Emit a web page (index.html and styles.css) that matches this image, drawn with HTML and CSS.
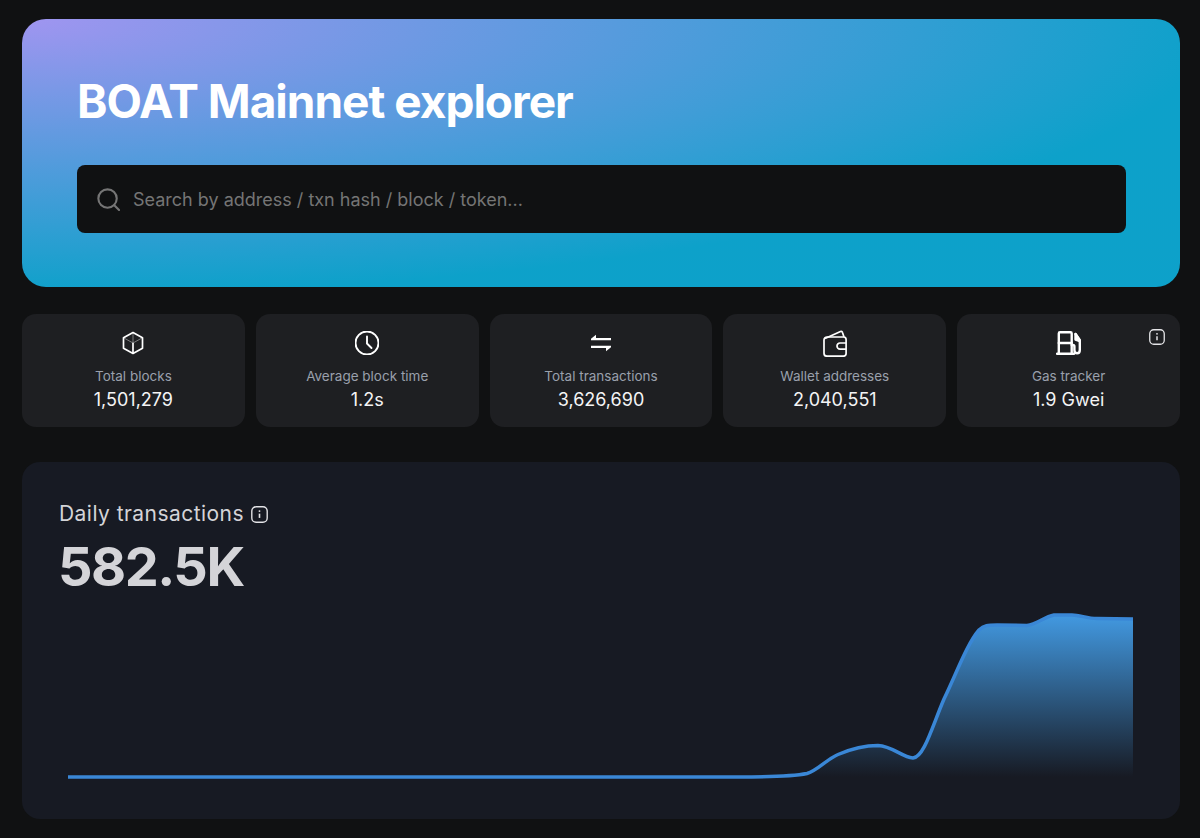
FILE: index.html
```html
<!DOCTYPE html>
<html lang="en">
<head>
    <meta charset="UTF-8">
    <meta name="viewport" content="width=device-width, initial-scale=1.0">
    <title>BOAT Mainnet explorer</title>
    <link rel="stylesheet" href="styles.css">
</head>
<body>
    <div class="hero">
        <h1 class="hero-title">BOAT Mainnet explorer</h1>
        <div class="search">
            <svg class="search-icon" viewBox="0 0 24 24" fill="none" stroke="currentColor" stroke-width="2.2">
                <circle cx="11" cy="11" r="9.6"/>
                <path d="M18 18l5 5" stroke-linecap="round"/>
            </svg>
            <span>Search by address / txn hash / block / token...</span>
        </div>
    </div>

    <div class="stats">
        <div class="stat">
            <svg class="stat-icon" viewBox="0 0 24 24" fill="none" stroke="currentColor" stroke-width="1.7" stroke-linejoin="round">
                <path d="M12 1.5l9.500 5.200v10.600L12 22.500l-9.500-5.200V6.700z"/>
                <path d="M12 12v10.500"/>
                <path d="M2.800 6.900L12 12l9.200-5.100" stroke-width="0.700" stroke-opacity="0.600"/>
                <path d="M12 1.500V12" stroke-width="0.700" stroke-opacity="0.600"/>
            </svg>
            <div class="stat-label">Total blocks</div>
            <div class="stat-value">1,501,279</div>
        </div>
        <div class="stat">
            <svg class="stat-icon" viewBox="0 0 24 24" fill="none" stroke="currentColor" stroke-width="1.9" stroke-linecap="round">
                <circle cx="12" cy="12" r="11.500"/>
                <path d="M12 5.500v7l4.500 4.500"/>
            </svg>
            <div class="stat-label">Average block time</div>
            <div class="stat-value">1.2s</div>
        </div>
        <div class="stat">
            <svg class="stat-icon" viewBox="0 0 24 24" fill="currentColor">
                <path d="M2 7.800L7 3.800v3.200h15v2.200H2z"/>
                <path d="M22 16.200L17 20.200v-3.200H2v-2.200h20z"/>
            </svg>
            <div class="stat-label">Total transactions</div>
            <div class="stat-value">3,626,690</div>
        </div>
        <div class="stat">
            <svg class="stat-icon wallet-icon" viewBox="0 0 24 27" fill="none" stroke="currentColor" stroke-width="1.700" stroke-linejoin="round">
                <path d="M2 8.500L17.500 1.500c1-.4 1.800.1 2 1L21 7"/>
                <path d="M4 7h16.500c1.500 0 2.600 1.100 2.600 2.600v14c0 1.500-1.100 2.600-2.600 2.600H4c-1.700 0-3-1.300-3-3V10c0-1.700 1.300-3 3-3z"/>
                <path d="M23 13h-6c-1.700 0-3 1.300-3 3s1.300 3.200 3 3.200h6"/>
            </svg>
            <div class="stat-label">Wallet addresses</div>
            <div class="stat-value">2,040,551</div>
        </div>
        <div class="stat stat-gas">
            <svg class="info-icon stat-info" viewBox="0 0 16 16" fill="none" stroke="currentColor">
                <rect x="0.750" y="0.750" width="14.500" height="14.500" rx="4" stroke-width="1.300"/>
                <path d="M8 7.200v4" stroke-width="1.500"/>
                <circle cx="8" cy="4.800" r="0.900" fill="currentColor" stroke="none"/>
            </svg>
            <svg class="stat-icon gas-icon" viewBox="0 0 26 24" fill="none" stroke="currentColor" stroke-width="2.400" stroke-linejoin="round" stroke-linecap="round">
                <path d="M2.800 22.800V2.500c0-.7.500-1.200 1.200-1.200h10.500c.7 0 1.200.5 1.200 1.200v20.300"/>
                <path d="M1 22.800h17M2.800 12h12.900"/>
                <path d="M19.500 3l4.300 6v10c0 2-1 3.300-2.700 3.300s-2.700-1.300-2.700-3.300v-3.500c0-1-.6-1.500-1.500-1.500h-1.200"/>
                <path d="M19.500 3v5.500l4.300 1.500z" fill="currentColor"/>
            </svg>
            <div class="stat-label">Gas tracker</div>
            <div class="stat-value">1.9 Gwei</div>
        </div>
    </div>

    <div class="chart">
        <div class="chart-title">
            <span>Daily transactions</span>
            <svg class="info-icon" viewBox="0 0 16 16" fill="none" stroke="currentColor">
                <rect x="0.750" y="0.750" width="14.500" height="14.500" rx="4" stroke-width="1.300"/>
                <path d="M8 7.200v4" stroke-width="1.500"/>
                <circle cx="8" cy="4.800" r="0.900" fill="currentColor" stroke="none"/>
            </svg>
        </div>
        <div class="chart-value">582.5K</div>
        <svg class="chart-plot" viewBox="0 0 1158 200" fill="none">
            <defs>
                <linearGradient id="areaFill" x1="0" y1="0" x2="0" y2="1">
                    <stop offset="0" stop-color="#4299e1" stop-opacity="1"/>
                    <stop offset="1" stop-color="#4299e1" stop-opacity="0"/>
                </linearGradient>
            </defs>
            <path fill="url(#areaFill)" d="M46 180 L716 180 C745 180 770 179.500 785 176.500 C795 174 805 162 816 157.500 C830 151.500 845 148.500 856 148.500 C870 149 880 160 891 161 C902 160 910 130 922 102 C935 75 945 47 957 33 C962 28 966 28 975 28 L1005 28.500 C1015 27 1022 20 1032 18 L1050 18 C1058 18 1065 21.500 1075 21.500 L1111 22 L1111 180 Z"/>
            <path stroke="#3a87d6" stroke-width="3.500" d="M46 180 L716 180 C745 180 770 179.500 785 176.500 C795 174 805 162 816 157.500 C830 151.500 845 148.500 856 148.500 C870 149 880 160 891 161 C902 160 910 130 922 102 C935 75 945 47 957 33 C962 28 966 28 975 28 L1005 28.500 C1015 27 1022 20 1032 18 L1050 18 C1058 18 1065 21.500 1075 21.500 L1111 22"/>
        </svg>
    </div>
</body>
</html>
```

FILE: styles.css
```css
body {
    margin: 0;
    padding: 19px 20px 19px 22px;
    background: #101112;
    font-family: Inter, "Liberation Sans", sans-serif;
    color: #fff;
}
.hero {
    height: 268px;
    box-sizing: border-box;
    padding: 52px 54px 0 55px;
    border-radius: 24px;
    background: radial-gradient(103.03% 103.03% at 0% 0%, rgba(183, 148, 244, 0.8) 0%, rgba(0, 163, 196, 0.8) 100%), #4299e1;
}
.hero-title {
    margin: 0 0 34px;
    font-size: 46px;
    line-height: 60px;
    font-weight: 700;
    letter-spacing: -1px;
}
.search {
    display: flex;
    align-items: center;
    gap: 13px;
    height: 68px;
    padding: 0 20px;
    border-radius: 8px;
    background: #101112;
    color: #757575;
    font-size: 18px;
}
.search-icon {
    width: 23px;
    height: 23px;
}
.stats {
    display: grid;
    grid-template-columns: repeat(5, 1fr);
    gap: 11px;
    margin-top: 27px;
}
.stat {
    position: relative;
    height: 113px;
    box-sizing: border-box;
    padding-top: 17px;
    border-radius: 14px;
    background: #1e1f22;
    text-align: center;
}
.stat-icon {
    display: block;
    width: 24px;
    height: 24px;
    margin: 0 auto;
}
.wallet-icon {
    height: 27px;
    margin: -1px auto -2px;
}
.gas-icon {
    width: 26px;
}
.stat-label {
    margin-top: 11px;
    font-size: 13.5px;
    line-height: 20px;
    color: #9aa0ac;
}
.stat-value {
    margin-top: 2px;
    font-size: 18px;
    line-height: 24px;
    color: #f4f4f5;
}
.info-icon {
    width: 16px;
    height: 16px;
    color: #e4e4e7;
}
.stat-info {
    position: absolute;
    top: 15px;
    right: 15px;
}
.chart {
    height: 357px;
    box-sizing: border-box;
    margin-top: 35px;
    padding-top: 38px;
    border-radius: 18px;
    background: #171a23;
}
.chart-title {
    display: flex;
    align-items: center;
    gap: 7px;
    padding-left: 37px;
    font-size: 21px;
    line-height: 28px;
    letter-spacing: 0.45px;
    color: #d4d4d8;
}
.chart-title .info-icon {
    width: 17px;
    height: 17px;
}
.chart-value {
    margin-top: 7px;
    padding-left: 36px;
    font-size: 54px;
    line-height: 64px;
    font-weight: 700;
    letter-spacing: -1.5px;
    color: #d4d4d8;
}
.chart-plot {
    display: block;
    width: 1158px;
    height: 200px;
    margin-top: -2px;
}
```
